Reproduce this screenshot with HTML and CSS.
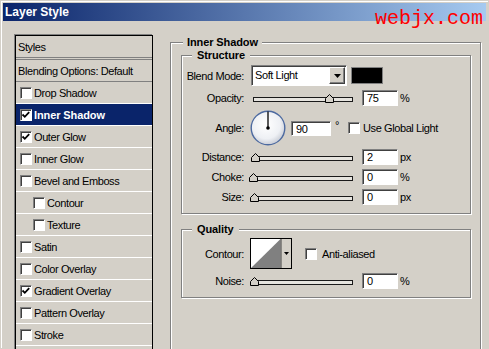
FILE: index.html
```
<!DOCTYPE html>
<html lang="en">
<head>
    <meta charset="UTF-8">
    <title>Layer Style</title>
    <link rel="stylesheet" href="styles.css">
</head>
<body>
    <div class="window">
        <div class="titlebar">
            <span class="title">Layer Style</span>
            <span class="watermark">webjx.com</span>
        </div>

        <div class="dialog">
            <!-- Styles list -->
            <ul class="style-list">
                <li class="style-item header double">Styles</li>
                <li class="style-item header dark">Blending Options: Default</li>
                <li class="style-item"><span class="check"></span>Drop Shadow</li>
                <li class="style-item active"><span class="check"><svg width="10" height="10" viewBox="0 0 10 10"><polyline points="1.5,4.5 3.8,6.8 8.2,2.2" fill="none" stroke="#000" stroke-width="1.8"/></svg></span>Inner Shadow</li>
                <li class="style-item"><span class="check"><svg width="10" height="10" viewBox="0 0 10 10"><polyline points="1.5,4.5 3.8,6.8 8.2,2.2" fill="none" stroke="#000" stroke-width="1.8"/></svg></span>Outer Glow</li>
                <li class="style-item"><span class="check"></span>Inner Glow</li>
                <li class="style-item"><span class="check"></span>Bevel and Emboss</li>
                <li class="style-item sub"><span class="check"></span>Contour</li>
                <li class="style-item sub"><span class="check"></span>Texture</li>
                <li class="style-item"><span class="check"></span>Satin</li>
                <li class="style-item"><span class="check"></span>Color Overlay</li>
                <li class="style-item"><span class="check"><svg width="10" height="10" viewBox="0 0 10 10"><polyline points="1.5,4.5 3.8,6.8 8.2,2.2" fill="none" stroke="#000" stroke-width="1.8"/></svg></span>Gradient Overlay</li>
                <li class="style-item"><span class="check"></span>Pattern Overlay</li>
                <li class="style-item"><span class="check"></span>Stroke</li>
                <li class="style-item"></li>
            </ul>

            <!-- Settings -->
            <div class="settings">
                <fieldset class="group outer">
                    <legend>Inner Shadow</legend>

                    <fieldset class="group inner structure">
                        <legend>Structure</legend>

                        <div class="row blend-row">
                            <span class="label">Blend Mode:</span>
                            <div class="select">
                                <span class="select-value">Soft Light</span>
                                <span class="select-btn"><svg width="7" height="4" viewBox="0 0 7 4"><polygon points="0,0 7,0 3.5,4" fill="#000"/></svg></span>
                            </div>
                            <span class="swatch"></span>
                        </div>

                        <div class="row">
                            <span class="label">Opacity:</span>
                            <div class="slider">
                                <div class="track"></div>
                                <svg class="thumb" style="left: 72px" width="9" height="9" viewBox="0 0 9 9"><polygon points="4.5,0.5 8.5,4.5 8.5,8.5 0.5,8.5 0.5,4.5" fill="#d4d0c8" stroke="#000"/></svg>
                            </div>
                            <span class="field">75</span>
                            <span class="unit">%</span>
                        </div>

                        <div class="row angle-row">
                            <span class="label">Angle:</span>
                            <svg class="dial" width="36" height="36" viewBox="0 0 36 36">
                                <defs>
                                    <radialGradient id="dialFill" cx="45%" cy="40%" r="60%">
                                        <stop offset="0" stop-color="#ffffff"/>
                                        <stop offset="0.7" stop-color="#eef0f4"/>
                                        <stop offset="1" stop-color="#c9cdd6"/>
                                    </radialGradient>
                                </defs>
                                <circle cx="18" cy="18" r="16.8" fill="url(#dialFill)" stroke="#4d6aa0" stroke-width="1.4"/>
                                <line x1="18" y1="18" x2="18" y2="1.5" stroke="#000" stroke-width="1.3"/>
                                <circle cx="18" cy="18" r="1.8" fill="#000"/>
                            </svg>
                            <span class="field wide">90</span>
                            <span class="degree">°</span>
                            <span class="check global"></span>
                            <span class="check-label">Use Global Light</span>
                        </div>

                        <div class="row distance-row">
                            <span class="label">Distance:</span>
                            <div class="slider">
                                <div class="track"></div>
                                <svg class="thumb" style="left: -2px" width="9" height="9" viewBox="0 0 9 9"><polygon points="4.5,0.5 8.5,4.5 8.5,8.5 0.5,8.5 0.5,4.5" fill="#d4d0c8" stroke="#000"/></svg>
                            </div>
                            <span class="field">2</span>
                            <span class="unit">px</span>
                        </div>

                        <div class="row">
                            <span class="label">Choke:</span>
                            <div class="slider">
                                <div class="track"></div>
                                <svg class="thumb" style="left: -4px" width="9" height="9" viewBox="0 0 9 9"><polygon points="4.5,0.5 8.5,4.5 8.5,8.5 0.5,8.5 0.5,4.5" fill="#d4d0c8" stroke="#000"/></svg>
                            </div>
                            <span class="field">0</span>
                            <span class="unit">%</span>
                        </div>

                        <div class="row">
                            <span class="label">Size:</span>
                            <div class="slider">
                                <div class="track"></div>
                                <svg class="thumb" style="left: -3px" width="9" height="9" viewBox="0 0 9 9"><polygon points="4.5,0.5 8.5,4.5 8.5,8.5 0.5,8.5 0.5,4.5" fill="#d4d0c8" stroke="#000"/></svg>
                            </div>
                            <span class="field">0</span>
                            <span class="unit">px</span>
                        </div>
                    </fieldset>

                    <fieldset class="group inner quality">
                        <legend>Quality</legend>

                        <div class="row contour-row">
                            <span class="label">Contour:</span>
                            <svg class="contour" width="42" height="31" viewBox="0 0 42 31">
                                <rect x="0.5" y="0.5" width="41" height="30" fill="#d4d0c8" stroke="#000"/>
                                <rect x="1" y="1" width="29.5" height="29" fill="#fff"/>
                                <polygon points="1,30 30.5,1 30.5,30" fill="#808080"/>
                                <line x1="31" y1="1" x2="31" y2="30" stroke="#404040"/>
                                <polygon points="34,14 39,14 36.5,17" fill="#000"/>
                            </svg>
                            <span class="check anti"></span>
                            <span class="check-label">Anti-aliased</span>
                        </div>

                        <div class="row">
                            <span class="label">Noise:</span>
                            <div class="slider">
                                <div class="track"></div>
                                <svg class="thumb" style="left: -3px" width="9" height="9" viewBox="0 0 9 9"><polygon points="4.5,0.5 8.5,4.5 8.5,8.5 0.5,8.5 0.5,4.5" fill="#d4d0c8" stroke="#000"/></svg>
                            </div>
                            <span class="field">0</span>
                            <span class="unit">%</span>
                        </div>
                    </fieldset>
                </fieldset>
            </div>
        </div>
    </div>
</body>
</html>
```

FILE: styles.css
```
* {
    box-sizing: border-box;
}
body {
    margin: 0;
    width: 489px;
    height: 349px;
    overflow: hidden;
    background-color: #d4d0c8;
    color: #000;
    font-family: 'Liberation Sans', Arial, sans-serif;
    font-size: 11px;
    letter-spacing: -0.4px;
}
.window {
    height: 349px;
    border: 1px solid #d4d0c8;
    box-shadow: inset 1px 1px 0 #fff;
    padding: 2px;
}
.titlebar {
    position: relative;
    height: 18px;
    padding-left: 2px;
    background: linear-gradient(to right, #0a246a, #a6caf0);
    color: #fff;
    font-size: 12px;
    font-weight: bold;
    line-height: 18px;
    letter-spacing: 0;
}
.watermark {
    position: absolute;
    left: 372px;
    top: 6px;
    font-family: 'Liberation Mono', 'Courier New', monospace;
    font-size: 20px;
    font-weight: normal;
    line-height: 20px;
    color: #ff0000;
}
.dialog {
    display: flex;
    align-items: flex-start;
    gap: 17px;
    padding: 14px 0 0 12px;
}

/* styles list */
.style-list {
    list-style: none;
    margin: 0;
    padding: 0;
    width: 138px;
    height: 330px;
    overflow: hidden;
    border: 1px solid #000;
    box-shadow: -1px -1px 0 #808080;
}
.style-item {
    display: flex;
    align-items: center;
    gap: 2px;
    height: 22px;
    padding-left: 4px;
    border-bottom: 1px solid #fff;
}
.style-item.header {
    padding-left: 2px;
}
.style-item.double {
    height: 24px;
    border-bottom: 3px double #808080;
}
.style-item.dark {
    border-bottom-color: #808080;
}
.style-item.sub {
    padding-left: 17px;
}
.style-item.active {
    background-color: #0a246a;
    color: #fff;
    font-weight: bold;
    letter-spacing: -0.1px;
}
.check {
    flex: none;
    display: inline-block;
    width: 12px;
    height: 12px;
    background-color: #fff;
    border: 1px solid;
    border-color: #808080 #fff #fff #808080;
    box-shadow: inset 1px 1px 0 #404040;
}
.check svg {
    display: block;
}

/* settings */
.settings {
    width: 311px;
}
.group {
    margin: 0;
    padding: 0;
    min-width: 0;
    border: 1px solid #808080;
    box-shadow: inset 1px 1px 0 #fff, 1px 1px 0 #fff;
}
.group legend {
    padding: 0 4px;
    margin-left: 12px;
    font-weight: bold;
    line-height: 13px;
    letter-spacing: -0.1px;
    background-color: #d4d0c8;
}
.group.outer {
    margin-top: 1px;
    height: 330px;
}
.group.inner {
    margin: 0 9px 0 10px;
    padding: 3px 0 8px 0;
}
.group.inner legend {
    margin-left: 10px;
    padding: 0 5px;
}
.group.quality {
    margin-top: 9px;
    padding-top: 2px;
}
.row {
    display: flex;
    align-items: center;
    height: 16px;
    margin-top: 4px;
}
.blend-row {
    height: 21px;
    margin-top: 0;
}
.angle-row {
    height: 36px;
}
.distance-row {
    margin-top: 3px;
}
.contour-row {
    height: 31px;
    margin-top: 0;
}
.label {
    flex: none;
    width: 62px;
    margin-right: 7px;
    text-align: right;
}

/* blend mode select */
.select {
    display: flex;
    width: 96px;
    height: 21px;
    background-color: #fff;
    border: 1px solid;
    border-color: #808080 #fff #fff #808080;
    box-shadow: inset 1px 1px 0 #404040;
    padding: 1px;
}
.select-value {
    flex: 1;
    padding-left: 2px;
    line-height: 17px;
}
.select-btn {
    display: flex;
    align-items: center;
    justify-content: center;
    width: 16px;
    height: 17px;
    background-color: #d4d0c8;
    border: 1px solid;
    border-color: #fff #404040 #404040 #fff;
    box-shadow: inset -1px -1px 0 #808080;
}
.select-btn svg {
    display: block;
}
.swatch {
    width: 32px;
    height: 17px;
    margin-left: 4px;
    background-color: #000;
    border: 1px solid #808080;
}

/* sliders */
.slider {
    position: relative;
    flex: none;
    width: 100px;
    height: 16px;
    margin-left: 2px;
}
.track {
    height: 5px;
    margin-top: 7px;
    background-color: #e6e4df;
    border: 1px solid #1a1a1a;
}
.thumb {
    position: absolute;
    top: 4px;
}
.field {
    flex: none;
    width: 36px;
    height: 16px;
    margin-left: 9px;
    padding-left: 4px;
    line-height: 14px;
    background-color: #fff;
    border: 1px solid;
    border-color: #808080 #fff #fff #808080;
    box-shadow: inset 1px 1px 0 #404040;
}
.field.wide {
    width: 40px;
    height: 15px;
    margin-left: 5px;
}
.unit {
    margin-left: 2px;
}

/* angle */
.dial {
    flex: none;
    margin-left: -1px;
}
.degree {
    margin-left: 4px;
    align-self: flex-start;
    margin-top: 9px;
}
.check.global {
    margin-left: 9px;
}
.check-label {
    margin-left: 3px;
}

/* quality */
.contour {
    flex: none;
    margin-left: -1px;
}
.check.anti {
    margin-left: 13px;
}
.check.anti + .check-label {
    margin-left: 5px;
}
```
